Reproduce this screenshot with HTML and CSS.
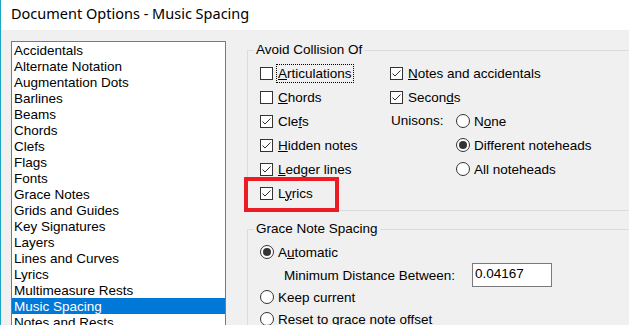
FILE: index.html
```html
<!DOCTYPE html>
<html lang="en">
<head>
  <meta charset="UTF-8">
  <title>Document Options - Music Spacing</title>
  <link rel="stylesheet" href="styles.css">
</head>
<body>
<div class="window">
  <div class="titlebar">Document Options - Music Spacing</div>

  <div class="dialog">
    <ul class="listbox">
      <li>Accidentals</li>
      <li>Alternate Notation</li>
      <li>Augmentation Dots</li>
      <li>Barlines</li>
      <li>Beams</li>
      <li>Chords</li>
      <li>Clefs</li>
      <li>Flags</li>
      <li>Fonts</li>
      <li>Grace Notes</li>
      <li>Grids and Guides</li>
      <li>Key Signatures</li>
      <li>Layers</li>
      <li>Lines and Curves</li>
      <li>Lyrics</li>
      <li>Multimeasure Rests</li>
      <li class="selected">Music Spacing</li>
      <li>Notes and Rests</li>
    </ul>

    <div class="panel">
      <fieldset class="group">
        <legend>Avoid Collision Of</legend>
        <div class="collision">
          <label class="opt c1"><span class="box"></span><span class="focus"><u>A</u>rticulations</span></label>
          <label class="opt c1"><span class="box"></span><span><u>C</u>hords</span></label>
          <label class="opt c1"><span class="box checked"><svg viewBox="0 0 11 11"><polyline points="1.5,5.5 4,8 9.5,2.5"/></svg></span><span>Cle<u>f</u>s</span></label>
          <label class="opt c1"><span class="box checked"><svg viewBox="0 0 11 11"><polyline points="1.5,5.5 4,8 9.5,2.5"/></svg></span><span><u>H</u>idden notes</span></label>
          <label class="opt c1"><span class="box checked"><svg viewBox="0 0 11 11"><polyline points="1.5,5.5 4,8 9.5,2.5"/></svg></span><span><u>L</u>edger lines</span></label>
          <label class="opt c1 marked"><span class="box checked"><svg viewBox="0 0 11 11"><polyline points="1.5,5.5 4,8 9.5,2.5"/></svg></span><span>L<u>y</u>rics</span></label>

          <label class="opt wide r1"><span class="box checked"><svg viewBox="0 0 11 11"><polyline points="1.5,5.5 4,8 9.5,2.5"/></svg></span><span><u>N</u>otes and accidentals</span></label>
          <label class="opt wide r2"><span class="box checked"><svg viewBox="0 0 11 11"><polyline points="1.5,5.5 4,8 9.5,2.5"/></svg></span><span>Secon<u>d</u>s</span></label>
          <span class="unisons">Unisons:</span>
          <label class="opt radio-col r3"><span class="radio"></span><span>N<u>o</u>ne</span></label>
          <label class="opt radio-col r4"><span class="radio on"></span><span>Different noteheads</span></label>
          <label class="opt radio-col r5"><span class="radio"></span><span>All noteheads</span></label>
        </div>
      </fieldset>

      <fieldset class="group grace">
        <legend>Grace Note Spacing</legend>
        <div class="grace-body">
          <label class="opt row-auto"><span class="radio on"></span><span>A<u>u</u>tomatic</span></label>
          <div class="min-row">
            <span class="min-label">Minimum Distance Between:</span>
            <span class="field">0.04167</span>
          </div>
          <label class="opt row-keep"><span class="radio"></span><span>Keep current</span></label>
          <label class="opt row-keep"><span class="radio"></span><span>Reset to grace note offset</span></label>
        </div>
      </fieldset>
    </div>
  </div>
</div>
</body>
</html>
```

FILE: styles.css
```css
:root {
  --face: #f0f0f0;
  --frame: #dcdcdc;
  --edge: #7a7a7a;
  --ink: #000;
  --mark: #333;
  --accent: #1ba6c6;
  --select: #0078d7;
  --callout: #ed1c24;
}

html, body {
  margin: 0;
  height: 100%;
  overflow: hidden;
}

body {
  font-family: "Liberation Sans", Arial, sans-serif;
  font-size: 13.5px;
  color: var(--ink);
  background: var(--face);
}

.window {
  height: 100%;
  border-left: 1px solid var(--accent);
}

.titlebar {
  height: 30px;
  line-height: 26px;
  padding-left: 10px;
  background: #fff;
  font-family: "Noto Sans", sans-serif;
  font-size: 14.5px;
  box-sizing: border-box;
}

.dialog {
  display: flex;
  padding: 11px 0 0 10px;
}

/* left list */
.listbox {
  list-style: none;
  margin: 0;
  padding: 0;
  width: 213px;
  height: 290px;
  border: 1px solid var(--edge);
  background: #fff;
  flex-shrink: 0;
}
.listbox li {
  height: 16px;
  line-height: 17px;
  padding-left: 2px;
  white-space: nowrap;
}
.listbox li.selected {
  background: var(--select);
  color: #fff;
}

/* right side */
.panel {
  margin-left: 21px;
  width: 410px;
  flex-shrink: 0;
}

.group {
  margin: 2px 0 0;
  padding: 0;
  border: 1px solid var(--frame);
  min-width: 0;
}
.group legend {
  margin-left: 6px;
  padding: 0 2px;
  line-height: 14px;
}

.grace {
  margin-top: 11px;
}

.opt {
  display: flex;
  align-items: center;
  gap: 5px;
  height: 24px;
  white-space: nowrap;
}

.box {
  width: 11px;
  height: 11px;
  border: 1px solid var(--mark);
  background: #fff;
  flex-shrink: 0;
}
.box svg {
  display: block;
  width: 11px;
  height: 11px;
  fill: none;
  stroke: var(--mark);
  stroke-width: 1;
}

.radio {
  width: 12px;
  height: 12px;
  border: 1px solid var(--mark);
  border-radius: 50%;
  background: #fff;
  flex-shrink: 0;
  display: flex;
  align-items: center;
  justify-content: center;
  margin-right: -1px;
}
.radio.on::after {
  content: "";
  width: 8px;
  height: 8px;
  border-radius: 50%;
  background: var(--mark);
}

.focus {
  outline: 1px dotted #000;
  outline-offset: 1px;
}

/* avoid collision grid */
.collision {
  display: grid;
  grid-template-columns: 130px 66px auto;
  grid-template-rows: repeat(6, 24px);
  padding: 4px 0 5px 12px;
}
.c1 { grid-column: 1; }
.wide { grid-column: 2 / 4; }
.r1 { grid-row: 1; }
.r2 { grid-row: 2; }
.r3 { grid-row: 3; }
.r4 { grid-row: 4; }
.r5 { grid-row: 5; }
.unisons {
  grid-column: 2;
  grid-row: 3;
  line-height: 24px;
  padding-left: 1px;
}
.radio-col { grid-column: 3; }

.marked {
  position: relative;
}
.marked::after {
  content: "";
  position: absolute;
  left: -16px;
  top: -4px;
  width: 87px;
  height: 27px;
  border: 4px solid var(--callout);
}

/* grace note spacing */
.grace-body {
  padding: 4px 0 0 12px;
}
.row-auto { height: 24px; }
.row-keep { height: 22px; }
.min-row {
  display: flex;
  align-items: center;
  height: 22px;
  padding-left: 24px;
}
.min-label {
  width: 188px;
}
.field {
  width: 76px;
  height: 22px;
  line-height: 20px;
  padding-left: 2px;
  border: 1px solid var(--edge);
  background: #fff;
}
```
